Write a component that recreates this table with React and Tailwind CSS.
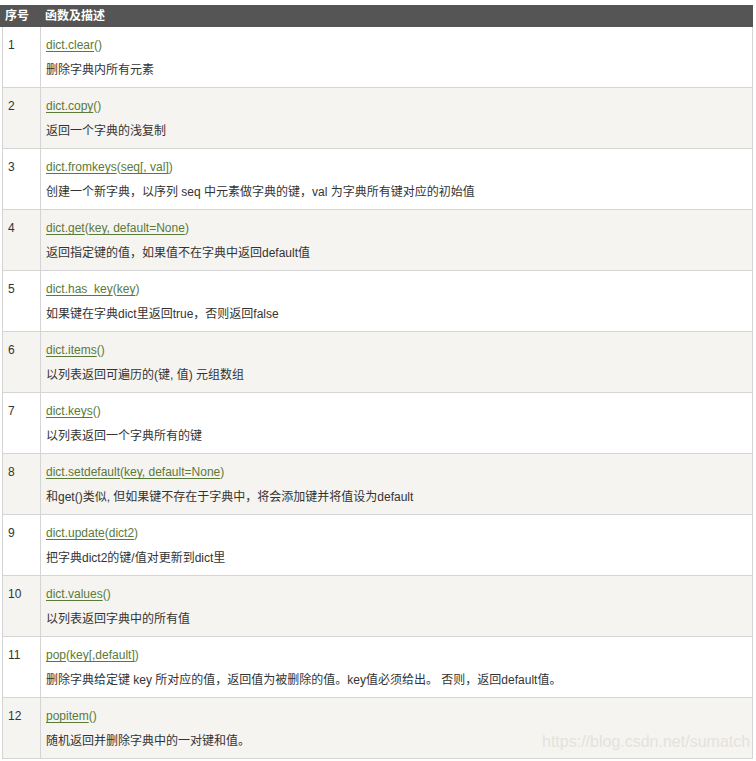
import React from "react";

const rows = [
  [["dict.clear", ""], "删除字典内所有元素"],
  [["dict.copy", ""], "返回一个字典的浅复制"],
  [["dict.fromkeys", "seq[, val]"], "创建一个新字典，以序列 seq 中元素做字典的键，val 为字典所有键对应的初始值"],
  [["dict.get", "key, default=None"], "返回指定键的值，如果值不在字典中返回default值"],
  [["dict.has_key", "key"], "如果键在字典dict里返回true，否则返回false"],
  [["dict.items", ""], "以列表返回可遍历的(键, 值) 元组数组"],
  [["dict.keys", ""], "以列表返回一个字典所有的键"],
  [["dict.setdefault", "key, default=None"], "和get()类似, 但如果键不存在于字典中，将会添加键并将值设为default"],
  [["dict.update", "dict2"], "把字典dict2的键/值对更新到dict里"],
  [["dict.values", ""], "以列表返回字典中的所有值"],
  [["pop", "key[,default]"], "删除字典给定键 key 所对应的值，返回值为被删除的值。key值必须给出。 否则，返回default值。"],
  [["popitem", ""], "随机返回并删除字典中的一对键和值。"],
];

export default function App() {
  return (
    <div
      className="relative w-[756px] h-[761px] bg-white pt-[5px] text-[12px] text-[#333]"
      style={{ fontFamily: '"Liberation Sans", Arial, "Noto Sans CJK SC", sans-serif' }}
    >
      <div className="w-[753px]">
        <div className="flex h-[22px] items-center bg-[#555555] text-white font-bold">
          <div className="w-[40px] pl-[5px]">序号</div>
          <div className="pl-[5px]">函数及描述</div>
        </div>
        <div className="ml-[2px] border-l border-r border-[#d4d4d4]">
          {rows.map(([[name, args], desc], i) => (
            <div
              key={i}
              className={`grid grid-cols-[38px_1fr] border-b border-[#d4d4d4] ${i % 2 === 1 ? "bg-[#f6f4f0]" : "bg-white"}`}
            >
              <div className="border-r border-[#d4d4d4] pl-[5px] pt-[6px] pb-[4px] leading-[25px]">{i + 1}</div>
              <div className="pl-[5px] pt-[6px] pb-[4px] leading-[25px]">
                <div>
                  <span className="text-[#5a7a3a] underline underline-offset-2">{name}</span>
                  <span className="text-[#5a7a3a]">(</span>
                  {args && <span className="text-[#5a7a3a] underline underline-offset-2">{args}</span>}
                  <span className="text-[#5a7a3a]">)</span>
                </div>
                <div>{desc}</div>
              </div>
            </div>
          ))}
        </div>
      </div>
      <div className="absolute left-[542px] top-[732px] whitespace-nowrap text-[16px] leading-[20px] text-[#e4e2de]">
        https://blog.csdn.net/sumatch
      </div>
    </div>
  );
}
